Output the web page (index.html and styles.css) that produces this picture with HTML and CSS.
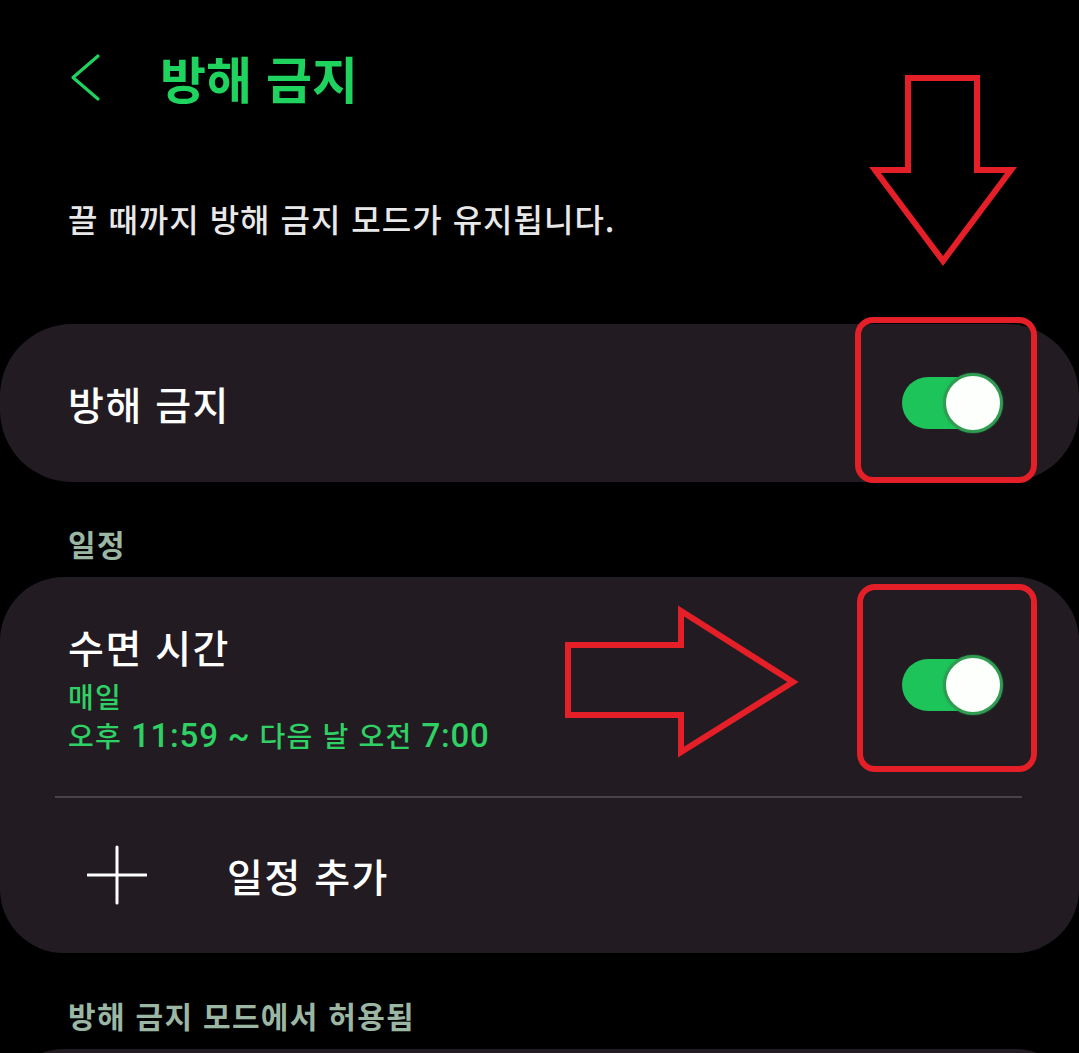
FILE: index.html
```html
<!DOCTYPE html>
<html lang="ko">
<head>
<meta charset="utf-8">
<title>방해 금지</title>
<link rel="stylesheet" href="styles.css">
</head>
<body>
<div class="screen">
  <header class="header">
    <svg class="back" width="32" height="50" viewBox="0 0 32 50" aria-hidden="true">
      <polyline points="28,3 3,24.5 28,46" fill="none" stroke="#1fd35f" stroke-width="3.2" stroke-linecap="round" stroke-linejoin="round"/>
    </svg>
    <h1 class="title">방해 금지</h1>
  </header>

  <p class="desc">끌 때까지 방해 금지 모드가 유지됩니다.</p>

  <section class="card card-main">
    <span class="row-title">방해 금지</span>
    <span class="switch on"><span class="track"></span></span>
  </section>

  <h2 class="label label-first">일정</h2>

  <section class="card card-schedule">
    <div class="schedule-row">
      <div class="schedule-text">
        <div class="row-title">수면 시간</div>
        <div class="sub sub-first">매일</div>
        <div class="sub">오후 <span class="num">11:59</span> <span class="num">~</span> 다음 날 오전 <span class="num">7:00</span></div>
      </div>
      <span class="switch on"><span class="track"></span></span>
    </div>
    <div class="divider"></div>
    <div class="add-row">
      <svg class="plus" width="60" height="60" viewBox="0 0 60 60" aria-hidden="true">
        <path d="M30 2 V58 M1 30 H59" stroke="#ffffff" stroke-width="3" stroke-linecap="round"/>
      </svg>
      <span class="row-title add-text">일정 추가</span>
    </div>
  </section>

  <h2 class="label label-second">방해 금지 모드에서 허용됨</h2>

  <section class="card card-next"></section>

  <svg class="annot" width="1079" height="1053" viewBox="0 0 1079 1053" aria-hidden="true">
    <g fill="none" stroke="#e41f28" stroke-width="6" stroke-linejoin="miter">
      <polygon points="908,78 977,78 977,170 1011,170 943,261 875,170 908,170"/>
      <rect x="858" y="320" width="176" height="160" rx="15"/>
      <polygon points="568,645 681,645 681,611 793,682 681,752 681,715 568,715"/>
      <rect x="860" y="587" width="174" height="182" rx="15"/>
    </g>
  </svg>
</div>
</body>
</html>
```

FILE: styles.css
```css
html, body {
  margin: 0;
  padding: 0;
  background: #000000;
}

body {
  font-family: "Noto Sans CJK KR", "Noto Sans", sans-serif;
  color: #ffffff;
  overflow: hidden;
}

.screen {
  position: relative;
  width: 1079px;
  height: 1053px;
  overflow: hidden;
}

.header {
  height: 154px;
  display: flex;
  align-items: center;
  padding-left: 70px;
  box-sizing: border-box;
}

.back {
  display: block;
  margin-top: 2px;
}

.title {
  margin: 0 0 0 58px;
  font-size: 50px;
  font-weight: 700;
  color: #1fd35f;
  letter-spacing: 0;
  line-height: 1;
}

.desc {
  margin: 42px 0 0 0;
  padding-left: 68px;
  font-size: 32px;
  line-height: 44px;
  font-weight: 500;
  color: #e8e8e8;
  letter-spacing: 1px;
}

.card {
  background: #221c22;
  width: 1079px;
}

.card-main {
  margin-top: 84px;
  height: 158px;
  border-radius: 72px;
  display: flex;
  align-items: center;
  justify-content: space-between;
  padding: 0 76px 0 68px;
  box-sizing: border-box;
}

.row-title {
  font-size: 39px;
  font-weight: 500;
  line-height: 48px;
  letter-spacing: 1.5px;
  color: #ffffff;
}

.label {
  margin: 0;
  padding-left: 68px;
  font-size: 30px;
  line-height: 40px;
  font-weight: 700;
  letter-spacing: 1.3px;
  color: #9bb6a3;
}

.label-first {
  margin-top: 41px;
}

.label-second {
  margin-top: 42px;
}

.card-schedule {
  margin-top: 14px;
  height: 376px;
  border-radius: 64px;
  display: flex;
  flex-direction: column;
}

.schedule-row {
  height: 219px;
  display: flex;
  align-items: center;
  justify-content: space-between;
  padding: 0 76px 4px 68px;
  box-sizing: border-box;
}

.schedule-text {
  display: flex;
  flex-direction: column;
  padding-top: 6px;
}

.sub {
  font-size: 28px;
  line-height: 38px;
  font-weight: 500;
  color: #2fd064;
  letter-spacing: 1.2px;
}

.num {
  font-family: "Roboto", "Noto Sans", sans-serif;
  font-size: 33px;
  font-weight: 500;
  letter-spacing: 0.8px;
  line-height: 1;
}

.sub-first {
  margin-top: 7px;
  line-height: 39px;
}

.divider {
  height: 2px;
  margin: 0 57px 0 55px;
  background: #4a4249;
}

.add-row {
  flex: 1;
  display: flex;
  align-items: center;
  padding-left: 87px;
  padding-bottom: 2px;
}

.plus {
  display: block;
}

.add-text {
  margin-left: 80px;
}

.card-next {
  margin-top: 14px;
  height: 200px;
  border-radius: 64px;
}

/* switch */
.switch {
  position: relative;
  width: 101px;
  height: 60px;
  flex: none;
}

.track {
  position: absolute;
  left: 0;
  top: 4px;
  width: 96px;
  height: 52px;
  border-radius: 26px;
  background: #1cc45a;
}

.switch::after {
  content: "";
  position: absolute;
  right: 0;
  top: 0;
  width: 54px;
  height: 54px;
  border-radius: 50%;
  background: #fcfffc;
  border: 3px solid #2f9c52;
  box-shadow: 0 0 2px rgba(40, 160, 80, 0.6);
}

.annot {
  position: absolute;
  left: 0;
  top: 0;
  pointer-events: none;
}
```
